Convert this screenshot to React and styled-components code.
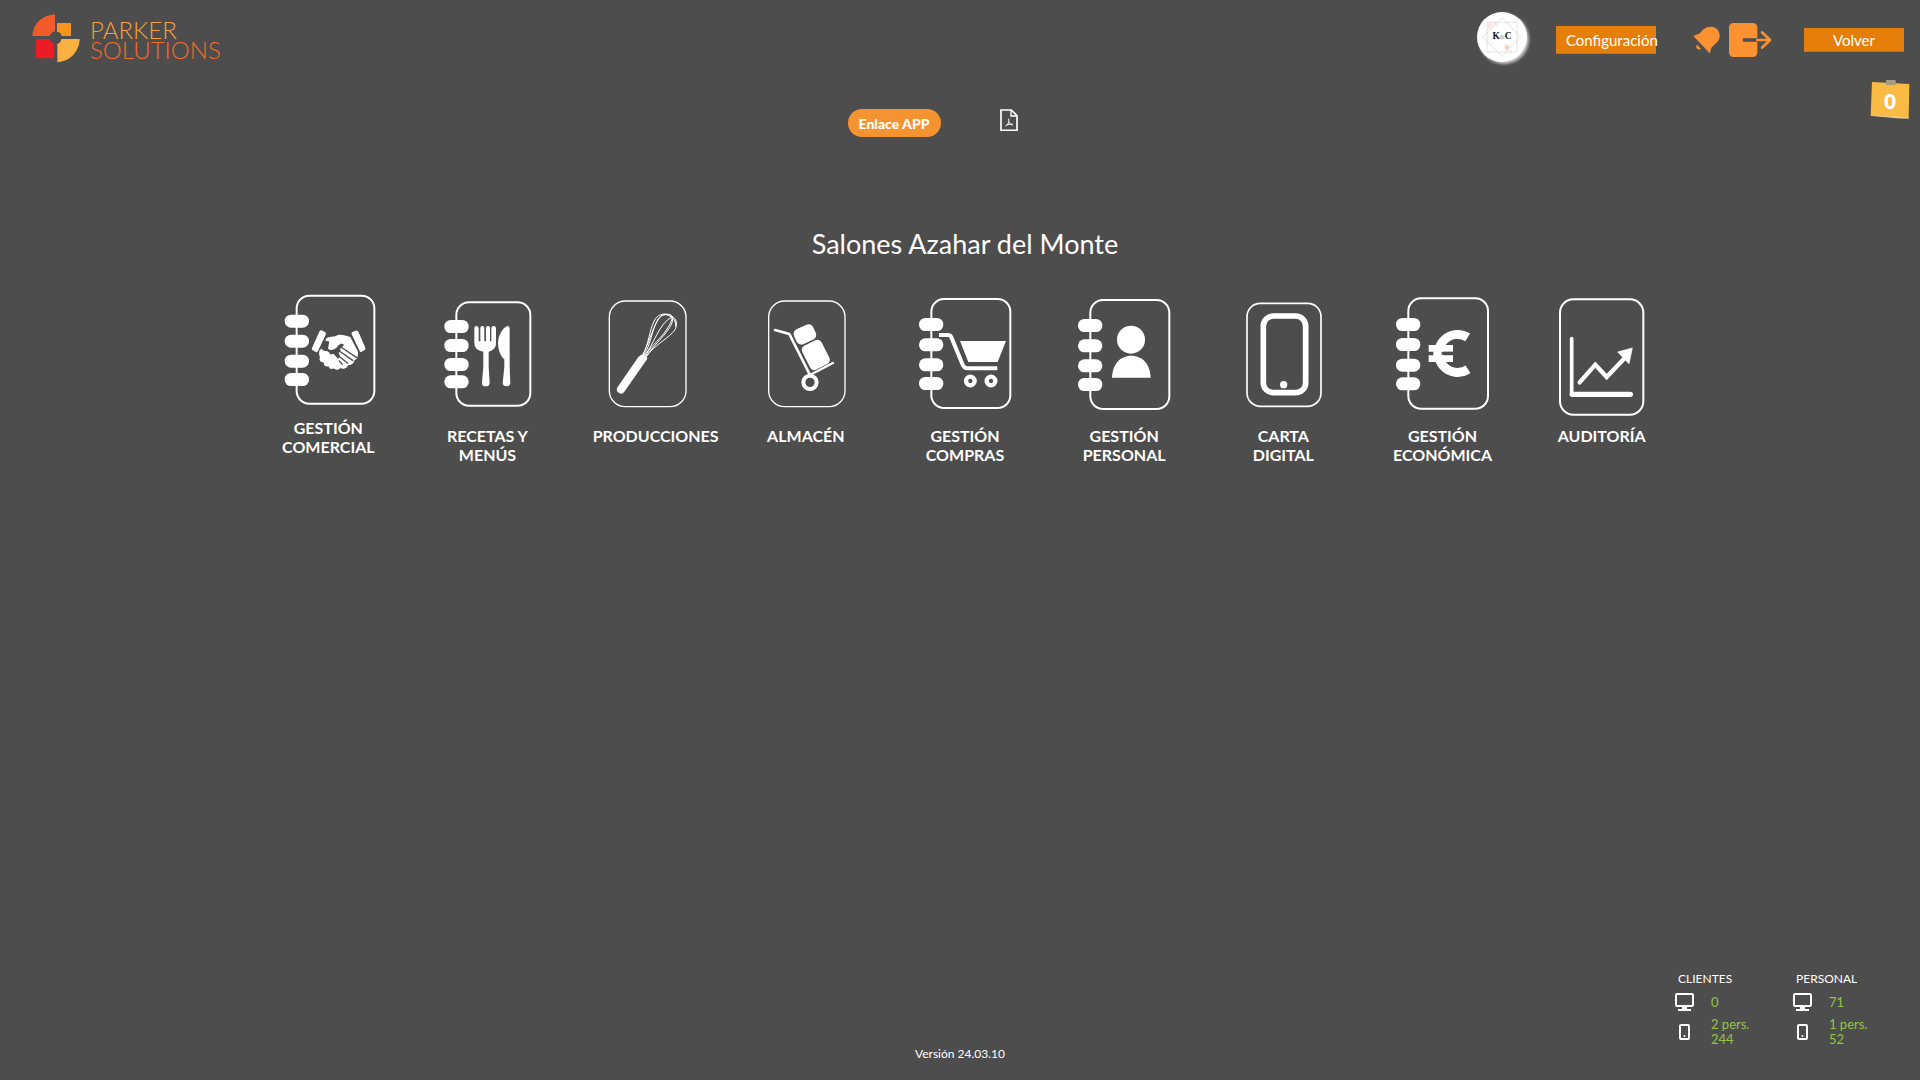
import React from 'react';
import styled, { createGlobalStyle } from 'styled-components';

const Global = createGlobalStyle`
  * {
    box-sizing: border-box;
  }
  body {
    margin: 0;
    background: #4d4d4d;
    color: #fff;
    font-family: Lato, 'Open Sans', sans-serif;
    font-size: 14px;
  }
  button {
    font-family: inherit;
    color: inherit;
    border: 0;
    padding: 0;
    background: none;
    cursor: pointer;
  }
  a {
    color: inherit;
    text-decoration: none;
  }
  svg {
    display: block;
  }
`;

const Page = styled.div`
  display: flex;
  flex-direction: column;
  min-height: 100vh;
`;

const Header = styled.header`
  display: flex;
  justify-content: space-between;
  align-items: flex-start;
  padding: 0 16px 0 32px;
`;

const Brand = styled.a`
  display: flex;
  gap: 10px;
  margin-top: 14px;
`;

const BrandName = styled.span`
  display: flex;
  flex-direction: column;
  padding-top: 6px;
  font-size: 24px;
  line-height: 20px;
  font-weight: 300;
  color: #f26a2c;
`;

const BrandTop = styled.span`
  color: #f9a03a;
`;

const Actions = styled.nav`
  display: flex;
  align-items: center;
  height: 80px;
`;

const Avatar = styled.button`
  width: 50px;
  height: 50px;
  margin: 0 29px 6px 0;
  border-radius: 50%;
  background: #fff;
  box-shadow: 2px 2px 3px #c8c8c8;
`;

const BarButton = styled.button`
  width: 100px;
  height: ${(props) => (props.$tall ? 28 : 24)}px;
  padding-left: ${(props) => (props.$tall ? 10 : 0)}px;
  background: #e67e0a;
  border-bottom: 1px solid #d06f14;
  font-size: 15px;
  line-height: 20px;
  text-align: ${(props) => (props.$tall ? 'left' : 'center')};
  white-space: nowrap;
`;

const Shortcuts = styled.div`
  display: flex;
  align-items: center;
  gap: 9px;
  margin: 0 32px 0 37px;
`;

const Tools = styled.div`
  display: grid;
  grid-template-columns: 1fr auto 1fr;
  align-items: start;
  padding: 0 10px;
`;

const Links = styled.div`
  grid-column: 2;
  display: flex;
  align-items: flex-start;
  gap: 59px;
  padding: 29px 55px 0 0;
`;

const Pill = styled.button`
  width: 93px;
  height: 28px;
  border-radius: 14px;
  background: #f59331;
  font-size: 14px;
  font-weight: 900;
`;

const Note = styled.button`
  justify-self: end;
  position: relative;
  width: 40px;
  height: 40px;
  font-family: 'Open Sans', sans-serif;
  font-size: 22px;
  line-height: 36px;
  font-weight: 700;
`;

const NotePaper = styled.svg`
  position: absolute;
  inset: 0;
  z-index: -1;
`;

const Main = styled.main`
  padding: 91px 0 40px 10px;
`;

const Title = styled.h1`
  margin: 0 0 30px;
  font-size: 27px;
  line-height: 32px;
  font-weight: 400;
  text-align: center;
`;

const Modules = styled.div`
  display: grid;
  grid-template-columns: repeat(9, 1fr);
  width: 75%;
  margin: 0 auto;
`;

const Module = styled.a`
  display: flex;
  flex-direction: column;
  align-items: center;
`;

const Label = styled.span`
  width: 108px;
  font-size: 16px;
  line-height: 19px;
  font-weight: 700;
  text-align: center;
`;

const Footer = styled.footer`
  display: grid;
  grid-template-columns: 1fr auto 1fr;
  align-items: end;
  margin-top: auto;
  padding: 0 9px 17px;
`;

const Version = styled.span`
  grid-column: 2;
  font-size: 12px;
  line-height: 18px;
`;

const Stats = styled.div`
  justify-self: end;
  display: flex;
  padding-bottom: 11px;
`;

const Stat = styled.section`
  width: 118px;
  font-size: 13px;
  line-height: 15px;
`;

const StatTitle = styled.h2`
  margin: 0 0 4px 3px;
  font-size: 12px;
  line-height: 18px;
  font-weight: 400;
`;

const StatRow = styled.div`
  display: grid;
  grid-template-columns: 19px 1fr;
  justify-items: center;
  align-items: center;
  gap: 17px;
  min-height: 20px;
  margin-bottom: 5px;
`;

const StatValue = styled.span`
  justify-self: start;
  color: #93c347;
`;

const LogoMark = () => (
  <svg width="48" height="49" viewBox="36 42 144 147" aria-hidden="true">
    <path d="M105 43V94C96 96 92 101 90 108H37C39 72 66 45 105 43Z" fill="#f15a29" />
    <path d="M111 69H153V108H126L120 98L111 95Z" fill="#f7941e" />
    <path d="M48 117H90C92 126 96 130 103 132V175H48Z" fill="#ed1c24" />
    <path d="M124 117H179C178 154 151 184 112 187V132C119 130 123 125 124 117Z" fill="#fbb040" />
  </svg>
);

const AvatarArt = () => (
  <svg width="50" height="50" viewBox="0 0 150 150" aria-hidden="true">
    <g fill="none" stroke="#d4d4d4" strokeWidth="2">
      <path d="M75 17L131 75L75 133L18 75Z" />
      <path d="M30 31H120V120H30Z" />
    </g>
    <g fill="#f8e6e0">
      <circle cx="38" cy="42" r="9" />
      <circle cx="56" cy="35" r="7" />
      <circle cx="91" cy="106" r="9" />
      <circle cx="101" cy="119" r="5" />
    </g>
    <path d="M84 102l9 4-6 9" fill="none" stroke="#eeb3a8" strokeWidth="3" />
    <text
      x="75"
      y="81"
      textAnchor="middle"
      fontFamily="Liberation Serif, serif"
      fontSize="28"
      fontWeight="700"
      fill="#111"
    >
      K<tspan fill="#a9a9a9" fontSize="20" fontWeight="400">&amp;</tspan>C
    </text>
  </svg>
);

const BellIcon = () => (
  <svg width="27" height="28" viewBox="698 81 81 84" fill="#fb9130" aria-hidden="true">
    <path d="M699 111C706 107 713 107 719 102C728 92 735 83 750 83C767 82 779 94 778 111C778 125 768 132 758 141C750 148 753 154 748 163Z" />
    <path d="M710 137L722 149C718 153 712 152 709 148C707 144 707 140 710 137Z" />
  </svg>
);

const ExitIcon = () => (
  <svg width="43" height="34" viewBox="807 69 129 102" aria-hidden="true">
    <path
      d="M822 69H877Q892 69 892 84V115H850Q845 120 850 125H892V156Q892 171 877 171H822Q807 171 807 156V84Q807 69 822 69Z"
      fill="#fb9130"
    />
    <path
      d="M892 120H929M906 97L930 120L906 143"
      fill="none"
      stroke="#fb9130"
      strokeWidth="8"
      strokeLinecap="round"
      strokeLinejoin="round"
    />
  </svg>
);

const PdfIcon = () => (
  <svg width="18" height="22" viewBox="600 59 54 66" fill="none" stroke="#fff" aria-hidden="true">
    <path d="M603 62H634L651 79V123H603Z" strokeWidth="5" />
    <path d="M633 63V80H650" strokeWidth="4" />
    <path d="M626 88C629 100 622 105 617 111M627 98C629 104 633 106 639 107M619 108C625 105 630 104 638 104" strokeWidth="3" />
  </svg>
);

const ScreenIcon = () => (
  <svg width="19" height="18" viewBox="0 0 19 18" aria-hidden="true">
    <rect x="1" y="1" width="17" height="12" rx="1" fill="none" stroke="#fff" strokeWidth="2" />
    <path d="M7 13h5v3h4v2H3v-2h4z" fill="#fff" />
  </svg>
);

const PhoneIcon = () => (
  <svg width="11" height="16" viewBox="0 0 11 16" aria-hidden="true">
    <rect x="1" y="1" width="9" height="14" rx="1" fill="none" stroke="#fff" strokeWidth="2" />
    <circle cx="5.5" cy="12" r="1" fill="#fff" />
  </svg>
);

const Frame = ({ x, y, w, h, r = 38, line = 6 }) => (
  <rect x={x} y={y} width={w} height={h} rx={r} fill="none" stroke="#fff" strokeWidth={line} />
);

const Rings = ({ x, ys }) =>
  ys.map((y) => <rect key={y} x={x} y={y - 20} width="73" height="39" rx="19" fill="#fff" />);

const modules = [
  {
    label: 'GESTIÓN COMERCIAL',
    x: 25,
    height: 128,
    art: (
      <>
        <Frame x={81} y={47} w={233} h={324} />
        <Rings x={45} ys={[124, 184, 244, 299]} />
        <g fill="#fff">
          <path d="M155 151L167 157Q171 159 168 164L145 213Q142 218 138 216L129 211Q125 209 127 204L149 155Q151 150 155 151Z" />
          <path d="M258 152L248 156Q244 158 246 163L270 213Q272 217 276 215L285 210Q289 208 287 203L266 155Q263 150 258 152Z" />
          <path d="M168 178C174 168 187 172 198 168C212 160 227 168 242 171L265 215C266 226 264 236 253 242C252 252 244 256 236 255C232 265 222 269 212 264C206 271 197 271 192 265C184 270 177 265 177 259C168 262 161 256 162 247C152 247 147 240 151 231C147 225 148 217 150 210L168 198Z" />
        </g>
        <g fill="#4d4d4d">
          <path d="M166 183L179 184L175 206C185 215 200 208 206 196C212 190 217 190 223 194L217 203L210 207L214 213L207 219L211 228L206 236L198 229C194 221 187 221 182 224C179 214 171 211 165 214L156 207Z" />
        </g>
        <path
          d="M218 204L260 232M213 216L249 241M207 228L234 250M209 243L218 253"
          fill="none"
          stroke="#4d4d4d"
          strokeWidth="4"
          strokeLinecap="round"
        />
      </>
    ),
  },
  {
    label: 'RECETAS Y MENÚS',
    x: 502,
    art: (
      <>
        <Frame x={560} y={67} w={222} h={310} />
        <Rings x={524} ys={[140, 197, 254, 306]} />
        <g fill="#fff">
          <path d="M614 144Q614 138 620 138T627 144V184H632V144Q632 138 638 138T644 144V184H649V144Q649 138 655 138T661 144V184H665V144Q665 138 672 138T679 144V190C679 205 669 212 657 215V260L660 308Q660 319 648 319T637 308L641 260V215C627 212 614 206 614 188Z" />
          <path d="M713 138Q720 138 720 145V260L722 309Q722 319 711 319T699 309L704 260V238C695 231 686 215 685 190C685 167 699 143 713 138Z" />
        </g>
      </>
    ),
  },
  {
    label: 'PRODUCCIONES',
    x: 51,
    art: (
      <>
        <Frame x={88} y={63} w={230} h={317} r={48} line={4} />
        <path
          d="M188 225C207 190 208 150 224 120C236 99 260 98 277 109C295 121 292 144 278 158C253 182 226 195 200 228M191 225C219 188 217 112 254 103C275 107 289 119 287 140M194 226C222 194 236 130 277 110C286 142 227 186 200 228M189 225C211 178 222 130 243 108C281 93 283 113 263 144C243 177 218 190 197 227"
          fill="none"
          stroke="#fff"
          strokeWidth="3"
        />
        <path d="M184 224Q190 221 197 226T201 238L133 335Q126 345 116 338T113 321L175 231Z" fill="#fff" />
      </>
    ),
  },
  {
    label: 'ALMACÉN',
    x: 528,
    art: (
      <>
        <Frame x={566} y={63} w={229} h={317} r={48} line={4} />
        <g fill="none" stroke="#fff" strokeLinecap="round" strokeLinejoin="round">
          <path d="M585 150L628 162L689 283" strokeWidth="8" />
          <path d="M691 284L759 249" strokeWidth="7" />
          <circle cx="690" cy="307" r="20" strokeWidth="12" />
        </g>
        <rect x="643" y="139" width="63" height="49" rx="15" transform="rotate(-25 674 163)" fill="#fff" />
        <rect x="675" y="185" width="65" height="80" rx="14" transform="rotate(-27 707 225)" fill="#fff" />
      </>
    ),
  },
  {
    label: 'GESTIÓN COMPRAS',
    x: 45,
    art: (
      <>
        <Frame x={94} y={57} w={237} h={327} />
        <Rings x={57} ys={[134, 195, 255, 311]} />
        <path d="M117 165H145Q151 165 154 172L188 254Q192 265 202 265H292" fill="none" stroke="#fff" strokeWidth="12" />
        <path d="M180 183H318L293 246H205Z" fill="#fff" />
        <g fill="none" stroke="#fff" strokeWidth="13">
          <circle cx="211" cy="303" r="13" />
          <circle cx="273" cy="303" r="13" />
        </g>
      </>
    ),
  },
  {
    label: 'GESTIÓN PERSONAL',
    x: 522,
    art: (
      <>
        <Frame x={571} y={60} w={237} h={327} />
        <Rings x={534} ys={[137, 198, 258, 314]} />
        <circle cx="693" cy="179" r="42" fill="#fff" />
        <path d="M636 293C637 255 659 227 694 227S751 255 752 293Z" fill="#fff" />
      </>
    ),
  },
  {
    label: 'CARTA DIGITAL',
    x: 39,
    art: (
      <>
        <Frame x={81} y={70} w={222} h={309} r={40} line={5} />
        <Frame x={130} y={108} w={127} h={230} r={30} line={17} />
        <circle cx="191" cy="314" r="11" fill="#fff" />
      </>
    ),
  },
  {
    label: 'GESTIÓN ECONÓMICA',
    x: 516,
    art: (
      <>
        <Frame x={565} y={55} w={239} h={331} />
        <Rings x={528} ys={[134, 194, 256, 312]} />
        <path d="M743 172A57 57 0 1 0 744 268" fill="none" stroke="#fff" strokeWidth="27" />
        <path d="M626 195H699V215H626ZM626 226H699V246H626Z" fill="#fff" />
        <path d="M640 220H699" stroke="#4d4d4d" strokeWidth="9" />
        <path d="M640 220H665" stroke="#fff" strokeWidth="13" />
      </>
    ),
  },
  {
    label: 'AUDITORÍA',
    x: 65,
    art: (
      <>
        <Frame x={89} y={58} w={250} h={346} r={40} />
        <g fill="none" stroke="#fff" strokeLinecap="round" strokeLinejoin="round">
          <path d="M124 176V343" strokeWidth="11" />
          <path d="M126 343H300" strokeWidth="16" />
          <path d="M148 307L195 254L229 291L284 233" strokeWidth="13" strokeLinejoin="miter" />
        </g>
        <path d="M306 204L296 251L262 216Z" fill="#fff" stroke="#fff" strokeWidth="2" />
      </>
    ),
  },
];

const ModuleArt = ({ x, height = 136, children }) => (
  <svg width="100" height={height} viewBox={`${x} 30 300 ${height * 3}`} aria-hidden="true">
    {children}
  </svg>
);

const stats = [
  { title: 'CLIENTES', screen: '0', people: '2 pers.', total: '244' },
  { title: 'PERSONAL', screen: '71', people: '1 pers.', total: '52' },
];

const App = () => {
  return (
    <Page>
      <Global />
      <Header>
        <Brand href="#">
          <LogoMark />
          <BrandName>
            <BrandTop>PARKER</BrandTop>
            <span>SOLUTIONS</span>
          </BrandName>
        </Brand>
        <Actions>
          <Avatar aria-label="Perfil">
            <AvatarArt />
          </Avatar>
          <BarButton $tall>Configuración</BarButton>
          <Shortcuts>
            <button aria-label="Avisos">
              <BellIcon />
            </button>
            <button aria-label="Salir">
              <ExitIcon />
            </button>
          </Shortcuts>
          <BarButton>Volver</BarButton>
        </Actions>
      </Header>
      <Tools>
        <Links>
          <Pill>Enlace APP</Pill>
          <a href="#" aria-label="PDF">
            <PdfIcon />
          </a>
        </Links>
        <Note>
          <NotePaper width="40" height="40" viewBox="0 0 120 120" aria-hidden="true">
            <path d="M6 6L118 12L116 113L2 108Z" fill="#fabb45" />
            <path d="M2 107L40 108L116 112V116L80 115Z" fill="#e9cf95" />
            <path d="M48 0H77V15H48Z" fill="#a69b83" />
          </NotePaper>
          0
        </Note>
      </Tools>
      <Main>
        <Title>Salones Azahar del Monte</Title>
        <Modules>
          {modules.map((item) => (
            <Module key={item.label} href="#">
              <ModuleArt x={item.x} height={item.height}>
                {item.art}
              </ModuleArt>
              <Label>{item.label}</Label>
            </Module>
          ))}
        </Modules>
      </Main>
      <Footer>
        <Version>Versión 24.03.10</Version>
        <Stats>
          {stats.map((item) => (
            <Stat key={item.title}>
              <StatTitle>{item.title}</StatTitle>
              <StatRow>
                <ScreenIcon />
                <StatValue>{item.screen}</StatValue>
              </StatRow>
              <StatRow>
                <PhoneIcon />
                <StatValue>
                  {item.people}
                  <br />
                  {item.total}
                </StatValue>
              </StatRow>
            </Stat>
          ))}
        </Stats>
      </Footer>
    </Page>
  );
};

export default App;
